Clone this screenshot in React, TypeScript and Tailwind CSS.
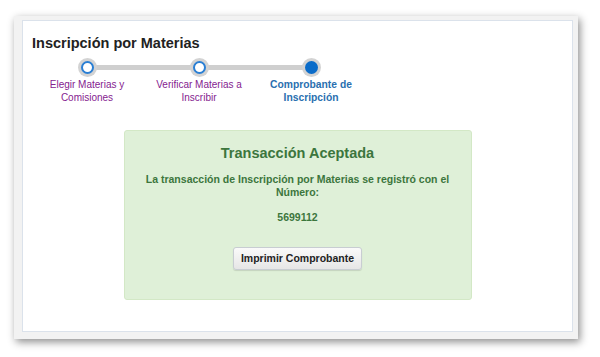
export default function App() {
  const steps = [
    { lines: ['Elegir Materias y', 'Comisiones'], done: true },
    { lines: ['Verificar Materias a', 'Inscribir'], done: true },
    { lines: ['Comprobante de', 'Inscripción'], done: false },
  ];

  return (
    <div className="w-[600px] h-[357px] bg-white font-['Liberation_Sans',Arial,sans-serif] pt-[16px] pl-[14px]">
      {/* window frame */}
      <div className="w-[564px] h-[323px] bg-[#f2f2f2] pt-[4px] pl-[8px] pr-[5px] pb-[7px] shadow-[2px_3px_8px_rgba(0,0,0,0.45)]">
        <div className="h-full border border-[#dbe2eb] bg-white flex flex-col">
          <h1 className="ml-[9px] mt-[14px] text-[14.5px] leading-[17px] font-bold text-[#222]">
            Inscripción por Materias
          </h1>

          {/* stepper */}
          <div className="relative ml-[8px] mt-[6px] flex">
            <div className="absolute left-[56px] top-[7px] w-[224px] h-[5px] bg-[#cfcfcf]" />
            {steps.map((s, i) => (
              <div key={i} className="relative w-[112px] flex flex-col items-center">
                <div className="w-[19px] h-[19px] rounded-full bg-[#d3d3d3] flex items-center justify-center">
                  {s.done ? (
                    <div className="w-[13px] h-[13px] rounded-full bg-white border-2 border-[#2a7fd4]" />
                  ) : (
                    <div className="w-[13px] h-[13px] rounded-full bg-[#0b6cc9]" />
                  )}
                </div>
                <div
                  className={`mt-[1px] leading-[13px] text-center whitespace-nowrap ${
                    s.done ? 'text-[10px] text-[#85228f]' : 'text-[10.3px] font-bold text-[#2a6fb0]'
                  }`}
                >
                  {s.lines[0]}
                  <br />
                  {s.lines[1]}
                </div>
              </div>
            ))}
          </div>

          {/* success box */}
          <div className="self-center mt-[26px] w-[348px] h-[170px] bg-[#dff0d8] border border-[#d3e8c6] rounded-[3px] px-[15px] pt-[12px] flex flex-col items-center text-[#3c763d]">
            <div className="text-[14.5px] leading-[20px] font-bold">Transacción Aceptada</div>
            <div className="mt-[10px] text-[10.5px] leading-[13px] font-bold text-center">
              La transacción de Inscripción por Materias se registró con el Número:
            </div>
            <div className="mt-[12px] text-[10.5px] leading-[13px] font-bold">5699112</div>
            <button className="mt-[23px] w-[129px] h-[23px] rounded-[3px] border border-[#c8cdd2] bg-gradient-to-b from-[#fafafa] to-[#e6e6e6] shadow-[0_1px_1px_rgba(0,0,0,0.12)] text-[10.5px] font-bold text-[#222]">
              Imprimir Comprobante
            </button>
          </div>
        </div>
      </div>
    </div>
  );
}
